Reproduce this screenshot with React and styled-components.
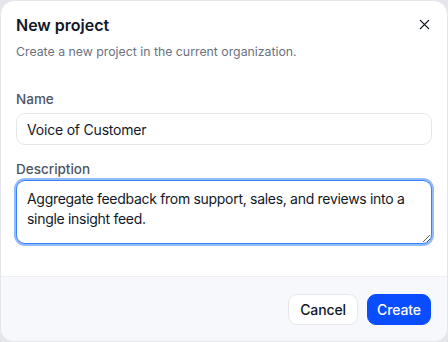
import React from 'react'
import styled, { createGlobalStyle } from 'styled-components'

const Global = createGlobalStyle`
  html, body { margin: 0; padding: 0; background: #e4e6eb; }
  body { font-family: Inter, 'Noto Sans', sans-serif; }
  * { box-sizing: border-box; }
`

const Dialog = styled.div`
  width: 448px;
  height: 342px;
  background: #fff;
  border: 1px solid #e4e6eb;
  border-radius: 14px;
  overflow: hidden;
  display: flex;
  flex-direction: column;
`

const Body = styled.div`
  flex: 1;
  padding: 14px 15px 0 15px;
`

const Header = styled.div`
  display: flex;
  justify-content: space-between;
  align-items: flex-start;
`

const Title = styled.h2`
  margin: 0;
  font-size: 16px;
  font-weight: 600;
  color: #111827;
  line-height: 20px;
`

const Close = styled.button`
  border: none;
  background: none;
  padding: 0;
  margin: 2px 1px 0 0;
  width: 14px;
  height: 14px;
  display: flex;
  align-items: center;
  justify-content: center;
  color: #111827;
  cursor: pointer;
`

const Subtitle = styled.p`
  margin: 9px 0 0;
  font-size: 12.3px;
  color: #6b7280;
  line-height: 16px;
`

const Field = styled.div`
  display: flex;
  flex-direction: column;
  margin-top: ${p => p.top}px;
`

const Label = styled.label`
  font-size: 13.5px;
  font-weight: 500;
  color: #4b5563;
  line-height: 16px;
  margin-bottom: ${p => p.gap || 6}px;
`

const Input = styled.input`
  height: 32px;
  border: 1px solid #e5e7eb;
  border-radius: 9px;
  padding: 0 10px;
  font: inherit;
  font-size: 14px;
  letter-spacing: -0.2px;
  color: #111827;
  outline: none;
`

const TextArea = styled.textarea`
  height: 64px;
  border: 1px solid #3b82f6;
  box-shadow: 0 0 0 2px rgba(59, 130, 246, 0.55);
  border-radius: 9px;
  padding: 8px 10px;
  font: inherit;
  font-size: 14px;
  letter-spacing: -0.3px;
  line-height: 20px;
  color: #111827;
  outline: none;
  resize: vertical;
`

const Footer = styled.div`
  height: 65px;
  background: #f7f8fb;
  border-top: 1px solid #eceef2;
  display: flex;
  justify-content: flex-end;
  align-items: center;
  gap: 9px;
  padding: 0 16px 0 0;
`

const Button = styled.button`
  height: 31px;
  padding: 0 ${p => (p.primary ? 9 : 11)}px;
  border-radius: 9px;
  font: inherit;
  font-size: 14px;
  font-weight: 500;
  letter-spacing: -0.1px;
  cursor: pointer;
  border: 1px solid ${p => (p.primary ? '#0a4dff' : '#e5e7eb')};
  background: ${p => (p.primary ? '#0a4dff' : '#fff')};
  color: ${p => (p.primary ? '#fff' : '#111827')};
`

export default function App() {
  return (
    <>
      <Global />
      <Dialog>
        <Body>
          <Header>
            <Title>New project</Title>
            <Close aria-label="Close">
              <svg width="11" height="11" viewBox="0 0 12 12" fill="none" stroke="currentColor" strokeWidth="1.5" strokeLinecap="round">
                <path d="M1.5 1.5l9 9M10.5 1.5l-9 9" />
              </svg>
            </Close>
          </Header>
          <Subtitle>Create a new project in the current organization.</Subtitle>
          <Field top={31}>
            <Label>Name</Label>
            <Input defaultValue="Voice of Customer" />
          </Field>
          <Field top={16}>
            <Label gap={3}>Description</Label>
            <TextArea defaultValue="Aggregate feedback from support, sales, and reviews into a single insight feed." />
          </Field>
        </Body>
        <Footer>
          <Button>Cancel</Button>
          <Button primary>Create</Button>
        </Footer>
      </Dialog>
    </>
  )
}
